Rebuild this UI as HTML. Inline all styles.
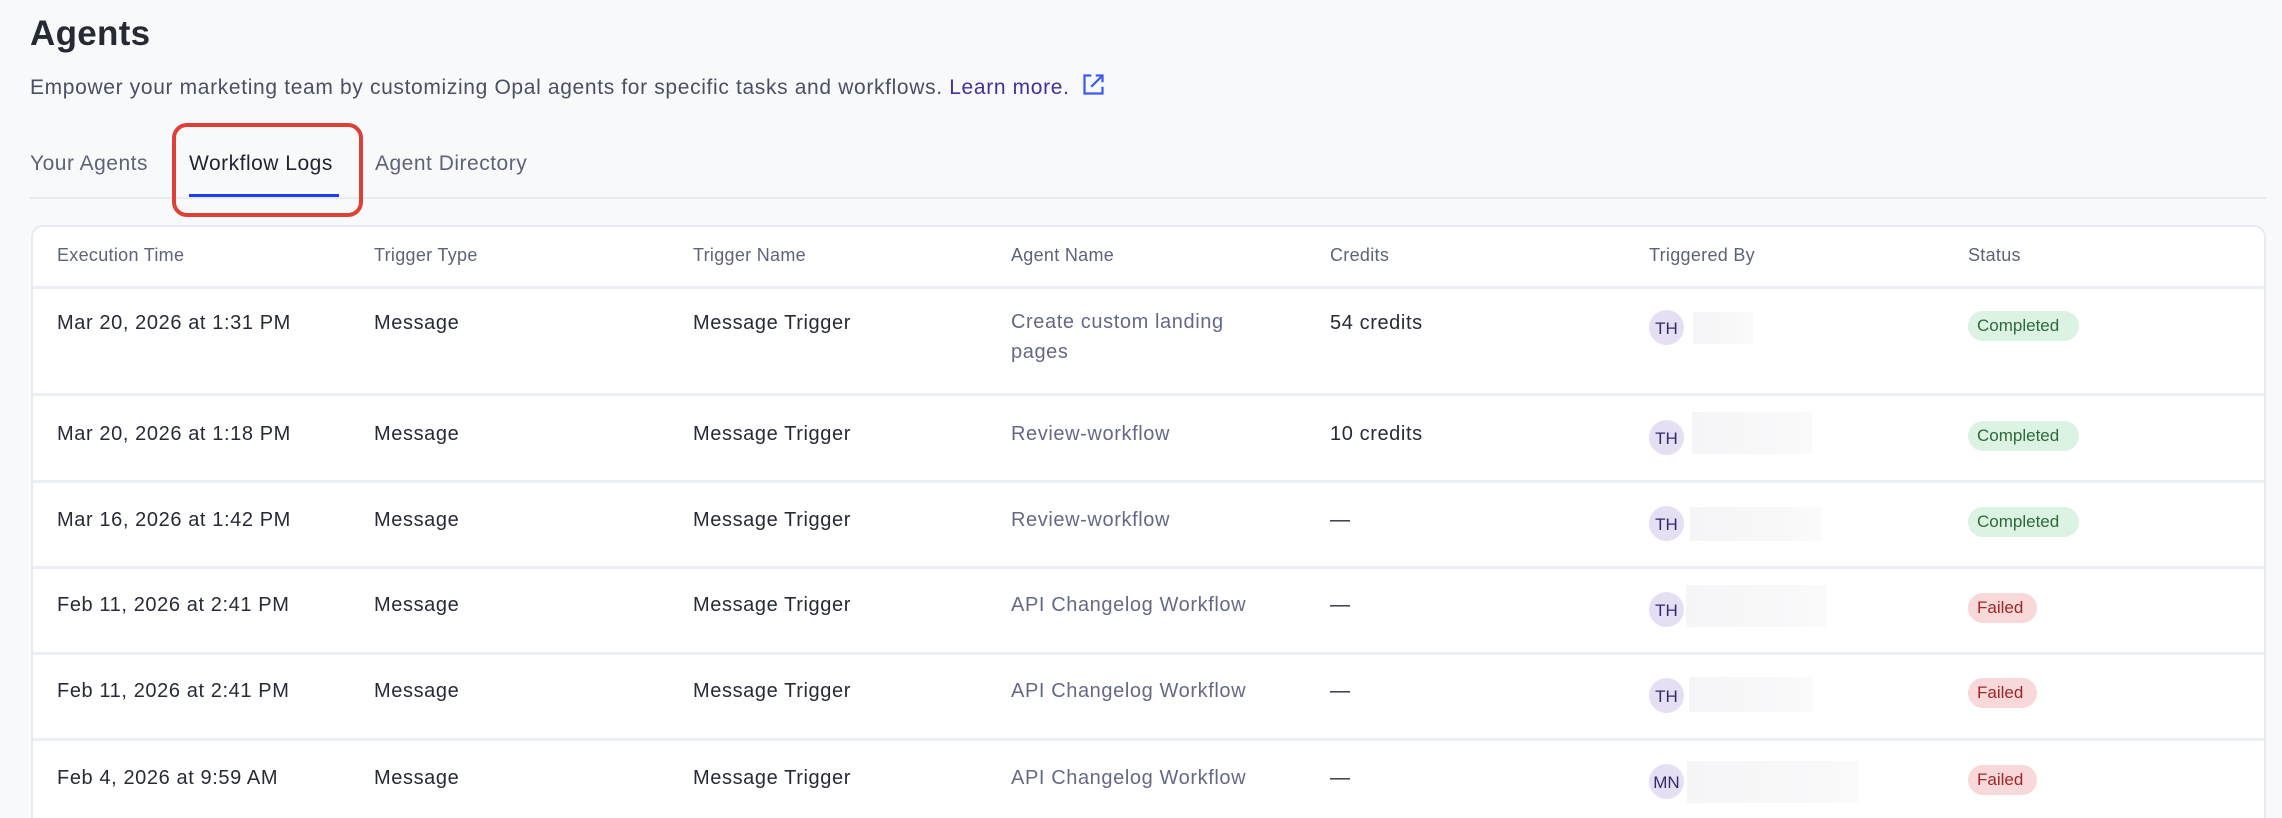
<!DOCTYPE html>
<html><head><meta charset="utf-8"><style>
*{margin:0;padding:0;box-sizing:border-box}
html{width:2282px;height:818px;overflow:hidden}
body{width:2282px;height:818px;background:#f8f9fb;font-family:"Liberation Sans",Arial,sans-serif;position:relative;overflow:hidden;color:#262b36}
.a{position:absolute;white-space:nowrap}
h1{position:absolute;left:30px;top:14px;font-size:35px;font-weight:700;color:#252a34;letter-spacing:0.3px}
.sub{left:30px;top:71px;font-size:21px;color:#4a5064;letter-spacing:0.65px}
.sub span{color:#46309a}
.sub svg{vertical-align:-4px;margin-left:10px}
.tab{top:152px;font-size:21px;color:#5e6478;letter-spacing:0.5px}
.card{position:absolute;left:31px;top:225px;width:2235px;height:593px;background:#fff;border:2px solid #e8ebf0;border-bottom:none;border-radius:12px 12px 0 0}
.hd{font-size:18px;color:#5e6478;top:245px;letter-spacing:0.3px}
.c{font-size:20px;color:#262b36;letter-spacing:0.6px}
.ag{color:#646a86}
.line{position:absolute;left:33px;width:2231px;height:3px;background:#ebeef2}
.av{position:absolute;width:35px;height:35px;border-radius:50%;background:#e6def3;color:#35286a;font-size:17px;text-align:center;line-height:37px}
.blur{position:absolute;background:linear-gradient(90deg,#f5f5f7,#fafafb);}
.b{position:absolute;height:30px;border-radius:15px;font-size:17px;line-height:30px;padding:0 9px}
.ok{background:#dcf2e2;color:#2d6a3a;width:111px}
.f{background:#f8d8d8;color:#9b2828;width:69px}
</style></head><body>
<h1>Agents</h1>
<div class="a sub">Empower your marketing team by customizing Opal agents for specific tasks and workflows. <span>Learn more.</span><svg width="27" height="27" viewBox="0 0 24 24" fill="none" stroke="#3d5af1" stroke-width="2"><path d="M10 4H4v16h16v-6M14 4h6v6M20 4L10 14"/></svg></div>
<div class="a tab" style="left:30px">Your Agents</div>
<div class="a tab" style="left:189px;color:#1f2430">Workflow Logs</div>
<div class="a tab" style="left:375px">Agent Directory</div>
<div class="a" style="left:30px;top:197px;width:2236px;height:2px;background:#e8ebf0"></div>
<div class="a" style="left:189px;top:194px;width:150px;height:3px;background:#1f3cf5"></div>
<div class="a" style="left:172px;top:123px;width:191px;height:94px;border:4px solid #df3f36;border-radius:15px"></div>
<div class="card"></div>
<div class="a hd" style="left:57px">Execution Time</div>
<div class="a hd" style="left:374px">Trigger Type</div>
<div class="a hd" style="left:693px">Trigger Name</div>
<div class="a hd" style="left:1011px">Agent Name</div>
<div class="a hd" style="left:1330px">Credits</div>
<div class="a hd" style="left:1649px">Triggered By</div>
<div class="a hd" style="left:1968px">Status</div>
<div class="line" style="top:286px"></div>
<div class="line" style="top:393px"></div>
<div class="line" style="top:480px"></div>
<div class="line" style="top:566px"></div>
<div class="line" style="top:652px"></div>
<div class="line" style="top:738px"></div>

<div class="a c" style="left:57px;top:312px">Mar 20, 2026 at 1:31 PM</div>
<div class="a c" style="left:374px;top:312px">Message</div>
<div class="a c" style="left:693px;top:312px">Message Trigger</div>
<div class="a c ag" style="left:1011px;line-height:30px;top:307px">Create custom landing<br>pages</div>
<div class="a c" style="left:1330px;top:312px">54 credits</div>
<div class="av" style="left:1649px;top:310px">TH</div><div class="blur" style="left:1693px;top:312px;width:60px;height:32px"></div>
<div class="b ok" style="left:1968px;top:311px">Completed</div>

<div class="a c" style="left:57px;top:423px">Mar 20, 2026 at 1:18 PM</div>
<div class="a c" style="left:374px;top:423px">Message</div>
<div class="a c" style="left:693px;top:423px">Message Trigger</div>
<div class="a c ag" style="left:1011px;top:423px">Review-workflow</div>
<div class="a c" style="left:1330px;top:423px">10 credits</div>
<div class="av" style="left:1649px;top:420px">TH</div><div class="blur" style="left:1692px;top:412px;width:120px;height:42px"></div>
<div class="b ok" style="left:1968px;top:421px">Completed</div>

<div class="a c" style="left:57px;top:509px">Mar 16, 2026 at 1:42 PM</div>
<div class="a c" style="left:374px;top:509px">Message</div>
<div class="a c" style="left:693px;top:509px">Message Trigger</div>
<div class="a c ag" style="left:1011px;top:509px">Review-workflow</div>
<div class="a c" style="left:1330px;top:509px">—</div>
<div class="av" style="left:1649px;top:506px">TH</div><div class="blur" style="left:1690px;top:507px;width:132px;height:34px"></div>
<div class="b ok" style="left:1968px;top:507px">Completed</div>

<div class="a c" style="left:57px;top:594px">Feb 11, 2026 at 2:41 PM</div>
<div class="a c" style="left:374px;top:594px">Message</div>
<div class="a c" style="left:693px;top:594px">Message Trigger</div>
<div class="a c ag" style="left:1011px;top:594px">API Changelog Workflow</div>
<div class="a c" style="left:1330px;top:594px">—</div>
<div class="av" style="left:1649px;top:592px">TH</div><div class="blur" style="left:1686px;top:585px;width:140px;height:42px"></div>
<div class="b f" style="left:1968px;top:593px">Failed</div>

<div class="a c" style="left:57px;top:680px">Feb 11, 2026 at 2:41 PM</div>
<div class="a c" style="left:374px;top:680px">Message</div>
<div class="a c" style="left:693px;top:680px">Message Trigger</div>
<div class="a c ag" style="left:1011px;top:680px">API Changelog Workflow</div>
<div class="a c" style="left:1330px;top:680px">—</div>
<div class="av" style="left:1649px;top:678px">TH</div><div class="blur" style="left:1689px;top:677px;width:124px;height:35px"></div>
<div class="b f" style="left:1968px;top:678px">Failed</div>

<div class="a c" style="left:57px;top:767px">Feb 4, 2026 at 9:59 AM</div>
<div class="a c" style="left:374px;top:767px">Message</div>
<div class="a c" style="left:693px;top:767px">Message Trigger</div>
<div class="a c ag" style="left:1011px;top:767px">API Changelog Workflow</div>
<div class="a c" style="left:1330px;top:767px">—</div>
<div class="av" style="left:1649px;top:764px">MN</div><div class="blur" style="left:1687px;top:761px;width:172px;height:42px"></div>
<div class="b f" style="left:1968px;top:765px">Failed</div>
</body></html>
